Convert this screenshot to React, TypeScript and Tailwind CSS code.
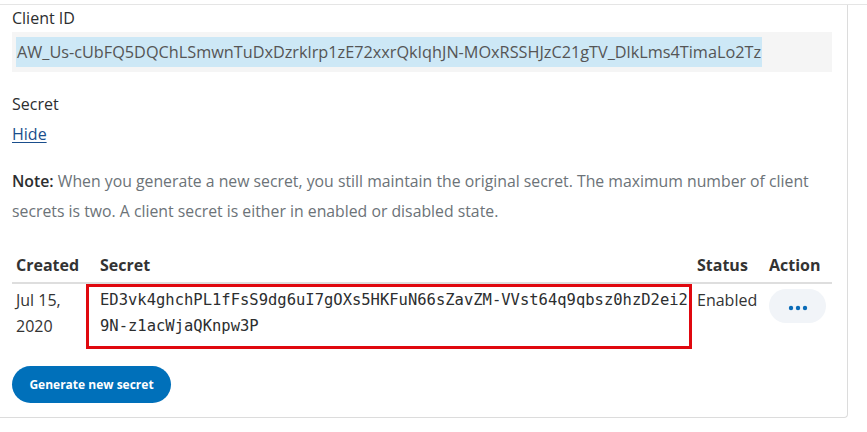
import * as React from "react"

const clientId =
  "AW_Us-cUbFQ5DQChLSmwnTuDxDzrklrp1zE72xxrQkIqhJN-MOxRSSHJzC21gTV_DlkLms4TimaLo2Tz"
const secret =
  "ED3vk4ghchPL1fFsS9dg6uI7gOXs5HKFuN66sZavZM-VVst64q9qbsz0hzD2ei29N-z1acWjaQKnpw3P"

function MoreButton() {
  return (
    <button
      className="mt-[2px] flex h-[34px] w-[57px] items-center justify-center rounded-full bg-[#f1f4f8]"
      aria-label="More actions"
    >
      <svg width="20" height="6" viewBox="0 0 20 6" className="mt-1">
        <circle cx="3" cy="3" r="2.2" fill="#0a6bb8" />
        <circle cx="10" cy="3" r="2.2" fill="#0a6bb8" />
        <circle cx="17" cy="3" r="2.2" fill="#0a6bb8" />
      </svg>
    </button>
  )
}

export default function App() {
  return (
    <div className="h-[432px] w-[867px] overflow-hidden bg-white pt-1 font-['Open_Sans',sans-serif] text-[#2c2e2f]">
      <div className="border-t border-[#e5e5e5]">
        <div className="w-[848px] rounded-br-[4px] border-r border-b border-[#dcdcdc] pl-3 pr-[15px] pt-[1px] pb-[14px]">
          <div className="text-[16px] leading-6">Client ID</div>
          <div className="mt-[2px] bg-[#f5f5f5] px-1 py-[5px]">
            <span className="inline-block bg-[#cde8f6] px-[1px] text-[16.25px] leading-[30px] text-[#555]">
              {clientId}
            </span>
          </div>

          <div className="mt-5 text-[16px] leading-6">Secret</div>
          <a
            href="#"
            className="mt-[6px] block w-fit text-[16px] leading-6 text-[#1a4e8c] underline underline-offset-2"
          >
            Hide
          </a>

          <p className="mt-5 text-[15.8px] leading-[30px] text-[#6c7378]">
            <span className="font-semibold text-[#2c2e2f]">Note:</span> When
            you generate a new secret, you still maintain the original secret.
            The maximum number of client
            <br />
            secrets is two. A client secret is either in enabled or disabled
            state.
          </p>

          <div className="mt-[27px] grid grid-cols-[84px_597px_72px_1fr] border-b-2 border-[#dedede] pb-[5px] text-[16px] font-bold leading-6 text-[#333]">
            <div className="pl-1">Created</div>
            <div className="pl-1">Secret</div>
            <div className="pl-1">Status</div>
            <div className="pl-1">Action</div>
          </div>

          <div className="relative grid grid-cols-[84px_597px_72px_1fr] pt-[3px] text-[16px] leading-[26px] text-[#333]">
            <div className="pl-1">
              Jul 15,
              <br />
              2020
            </div>
            <div className="break-all pl-1 font-['DejaVu_Sans_Mono',monospace] text-[15.5px] text-[#2c2e2f]">
              {secret}
            </div>
            <div className="pl-1">Enabled</div>
            <div className="pl-1">
              <MoreButton />
            </div>
            <div className="pointer-events-none absolute left-[74px] top-0 h-[65px] w-[606px] border-[3px] border-[#e0080f]" />
          </div>

          <button className="mt-[27px] h-[37px] w-[159px] rounded-full bg-[#0070ba] text-[12px] font-bold text-white">
            Generate new secret
          </button>
        </div>
      </div>
    </div>
  )
}
